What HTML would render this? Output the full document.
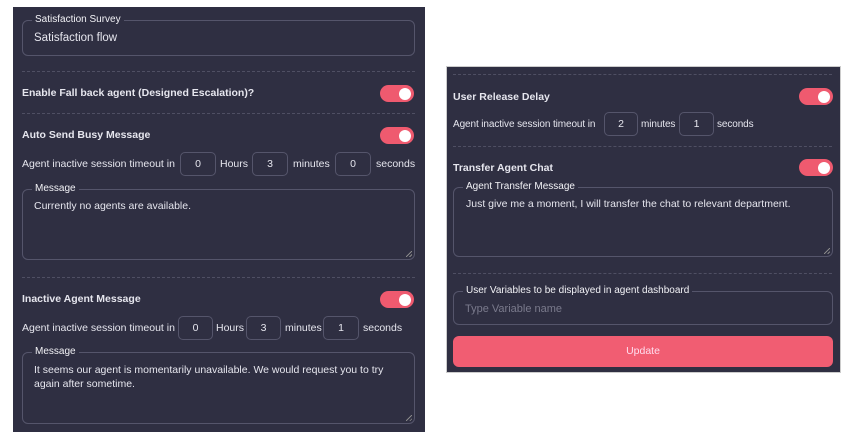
<!DOCTYPE html>
<html><head><style>
*{margin:0;padding:0;box-sizing:border-box}
body{width:850px;height:439px;background:#fff;position:relative;overflow:hidden;font-family:"Liberation Sans",sans-serif;color:#e6e6ee;font-size:10.5px}
.p{position:absolute;background:#2f2f42}
.a{position:absolute;white-space:nowrap}
.b{font-weight:bold;font-size:10.5px}
.fs{position:absolute;border:1px solid #55556b;border-radius:6px}
.lg{position:absolute;top:-7px;left:9px;background:#2f2f42;padding:0 3px;font-size:10px;line-height:12px;color:#f2f2f6}
.d{position:absolute;border-top:1px dashed #4f4f63;height:0}
.t{position:absolute;width:34px;height:17px;border-radius:9px;background:#ef5a6f}
.t::after{content:"";position:absolute;right:3px;top:2.5px;width:12px;height:12px;border-radius:50%;background:#fff}
.bx{position:absolute;height:24px;border:1px solid #55556b;border-radius:5px;text-align:center;line-height:22px}
.rs{position:absolute;right:2px;bottom:2px;width:6px;height:6px;background:linear-gradient(135deg,transparent 45%,#888 45%,#888 55%,transparent 55%,transparent 75%,#888 75%,#888 85%,transparent 85%)}
.s{font-size:10px;letter-spacing:-0.1px}
</style></head><body>
<div class="p" style="left:13px;top:7px;width:412px;height:425px"></div>
<div class="fs" style="left:22px;top:20px;width:393px;height:36px"><span class="lg">Satisfaction Survey</span><span class="a" style="left:11px;top:11px;font-size:11.5px">Satisfaction flow</span></div>
<div class="d" style="left:22px;top:71px;width:393px"></div>
<div class="a b" style="left:22px;top:87px">Enable Fall back agent (Designed Escalation)?</div>
<div class="t" style="left:380px;top:85px"></div>
<div class="d" style="left:22px;top:113px;width:393px"></div>
<div class="a b" style="left:22px;top:129px">Auto Send Busy Message</div>
<div class="t" style="left:380px;top:127px"></div>
<div class="a" style="left:22px;top:158px">Agent inactive session timeout in</div>
<div class="bx" style="left:180px;top:152px;width:36px">0</div>
<div class="a" style="left:220px;top:158px">Hours</div>
<div class="bx" style="left:252px;top:152px;width:36px">3</div>
<div class="a" style="left:293px;top:158px">minutes</div>
<div class="bx" style="left:335px;top:152px;width:36px">0</div>
<div class="a" style="left:376px;top:158px">seconds</div>
<div class="fs" style="left:22px;top:189px;width:393px;height:71px"><span class="lg">Message</span><span class="a" style="left:11px;top:10px">Currently no agents are available.</span><div class="rs"></div></div>
<div class="d" style="left:22px;top:277px;width:393px"></div>
<div class="a b" style="left:22px;top:293px">Inactive Agent Message</div>
<div class="t" style="left:380px;top:291px"></div>
<div class="a" style="left:22px;top:322px">Agent inactive session timeout in</div>
<div class="bx" style="left:178px;top:316px;width:35px">0</div>
<div class="a" style="left:216px;top:322px">Hours</div>
<div class="bx" style="left:246px;top:316px;width:35px">3</div>
<div class="a" style="left:285px;top:322px">minutes</div>
<div class="bx" style="left:323px;top:316px;width:36px">1</div>
<div class="a" style="left:363px;top:322px">seconds</div>
<div class="fs" style="left:22px;top:352px;width:393px;height:72px"><span class="lg">Message</span><span class="a" style="left:11px;top:10px;white-space:normal;width:370px;line-height:14px">It seems our agent is momentarily unavailable. We would request you to try again after sometime.</span><div class="rs"></div></div>

<div class="p" style="left:447px;top:67px;width:393px;height:305px;outline:1px solid #ccc"></div>
<div class="d" style="left:453px;top:74px;width:379px"></div>
<div class="a b" style="left:453px;top:91px">User Release Delay</div>
<div class="t" style="left:799px;top:88px"></div>
<div class="a s" style="left:453px;top:119px">Agent inactive session timeout in</div>
<div class="bx" style="left:604px;top:112px;width:34px">2</div>
<div class="a s" style="left:641px;top:119px">minutes</div>
<div class="bx" style="left:679px;top:112px;width:35px">1</div>
<div class="a s" style="left:717px;top:119px">seconds</div>
<div class="d" style="left:453px;top:146px;width:379px"></div>
<div class="a b" style="left:453px;top:162px">Transfer Agent Chat</div>
<div class="t" style="left:799px;top:159px"></div>
<div class="fs" style="left:453px;top:187px;width:380px;height:70px"><span class="lg">Agent Transfer Message</span><span class="a" style="left:12px;top:10px">Just give me a moment, I will transfer the chat to relevant department.</span><div class="rs"></div></div>
<div class="d" style="left:453px;top:273px;width:379px"></div>
<div class="fs" style="left:453px;top:291px;width:380px;height:34px"><span class="lg">User Variables to be displayed in agent dashboard</span><span class="a" style="left:11px;top:11px;color:#7a7a8c;font-size:11px">Type Variable name</span></div>
<div class="a" style="left:453px;top:336px;width:380px;height:31px;background:#f15d72;border-radius:6px;text-align:center;line-height:31px;color:#fde">Update</div>
</body></html>
